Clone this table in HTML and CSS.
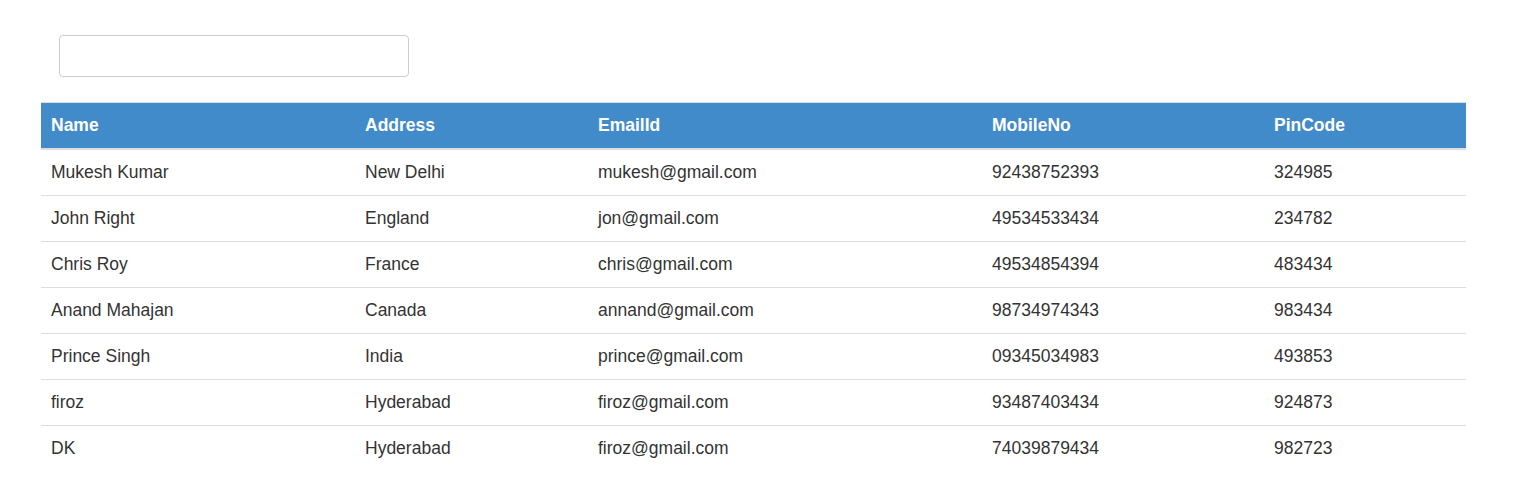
FILE: index.html
```html
<!DOCTYPE html>
<html>
<head>
<meta charset="utf-8">
<link rel="stylesheet" href="styles.css">
</head>
<body>
<div class="page">
  <div class="search-row">
    <input class="search" type="text">
  </div>
  <table class="grid">
    <thead>
      <tr>
        <th class="c1">Name</th>
        <th class="c2">Address</th>
        <th class="c3">EmailId</th>
        <th class="c4">MobileNo</th>
        <th class="c5">PinCode</th>
      </tr>
    </thead>
    <tbody>
      <tr><td>Mukesh Kumar</td><td>New Delhi</td><td>mukesh@gmail.com</td><td>92438752393</td><td>324985</td></tr>
      <tr><td>John Right</td><td>England</td><td>jon@gmail.com</td><td>49534533434</td><td>234782</td></tr>
      <tr><td>Chris Roy</td><td>France</td><td>chris@gmail.com</td><td>49534854394</td><td>483434</td></tr>
      <tr><td>Anand Mahajan</td><td>Canada</td><td>annand@gmail.com</td><td>98734974343</td><td>983434</td></tr>
      <tr><td>Prince Singh</td><td>India</td><td>prince@gmail.com</td><td>09345034983</td><td>493853</td></tr>
      <tr><td>firoz</td><td>Hyderabad</td><td>firoz@gmail.com</td><td>93487403434</td><td>924873</td></tr>
      <tr><td>DK</td><td>Hyderabad</td><td>firoz@gmail.com</td><td>74039879434</td><td>982723</td></tr>
    </tbody>
  </table>
</div>
</body>
</html>
```
FILE: styles.css
```css
html, body {
  margin: 0;
  padding: 0;
  background: #fff;
}
body {
  font-family: "Liberation Sans", Arial, sans-serif;
  font-size: 17.5px;
  color: #333;
}
.page {
  padding: 35px 0 0 41px;
  width: 1425px;
}
.search-row {
  padding-left: 18px;
  height: 67px;
}
.search {
  display: block;
  box-sizing: border-box;
  width: 350px;
  height: 42px;
  border: 1px solid #ccc;
  border-radius: 4px;
  margin: 0;
  padding: 6px 12px;
  font-family: inherit;
  font-size: 17.5px;
  background: #fff;
}
.grid {
  width: 1425px;
  border-collapse: collapse;
  border-spacing: 0;
  table-layout: fixed;
}
.grid th, .grid td {
  box-sizing: border-box;
  text-align: left;
  padding: 10px;
  line-height: 25px;
  vertical-align: middle;
  white-space: nowrap;
}
.grid thead th {
  background: #428bca;
  color: #fff;
  font-weight: bold;
  border-top: 1px solid #ddd;
  border-bottom: 2px solid #ddd;
}
.grid tbody td {
  border-top: 1px solid #ddd;
}
.grid tbody tr:first-child td {
  border-top: 0;
}
.c1 { width: 314px; }
.c2 { width: 233px; }
.c3 { width: 394px; }
.c4 { width: 282px; }
.c5 { width: 202px; }
```
